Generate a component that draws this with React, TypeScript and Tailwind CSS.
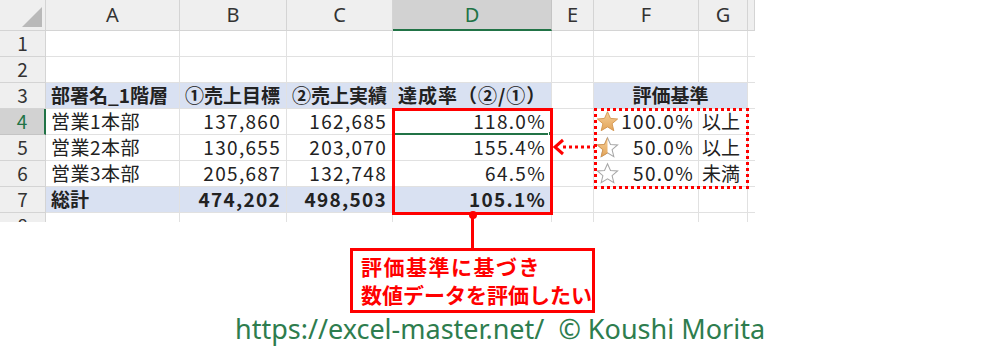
import React from "react";

const jp = { fontFamily: '"Noto Sans CJK JP", "Noto Sans", sans-serif' };

type StarKind = "full" | "half" | "empty";

function Star({ kind }: { kind: StarKind }) {
  const pts = "10,1.5 12.6,7.3 18.8,7.8 14,11.9 15.5,18 10,14.7 4.5,18 6,11.9 1.2,7.8 7.4,7.3";
  return (
    <svg width="23" height="23" viewBox="0 0 20 20" className="shrink-0">
      <defs>
        <linearGradient id="gold" x1="0" y1="0" x2="0" y2="1">
          <stop offset="0" stopColor="#f6cf98" />
          <stop offset="1" stopColor="#e3a55a" />
        </linearGradient>
        <clipPath id="lefthalf">
          <rect x="0" y="0" width="10" height="20" />
        </clipPath>
      </defs>
      {kind === "full" && <polygon points={pts} fill="url(#gold)" stroke="#d39550" strokeWidth="0.8" />}
      {kind !== "full" && <polygon points={pts} fill="#fff" stroke="#a6a6a6" strokeWidth="0.9" />}
      {kind === "half" && (
        <polygon points={pts} fill="url(#gold)" stroke="#d39550" strokeWidth="0.8" clipPath="url(#lefthalf)" />
      )}
    </svg>
  );
}

const cols = ["A", "B", "C", "D", "E", "F", "G", ""];

const data = [
  ["営業1本部", "137,860", "162,685", "118.0%"],
  ["営業2本部", "130,655", "203,070", "155.4%"],
  ["営業3本部", "205,687", "132,748", "64.5%"],
];

const criteria: [StarKind, string, string][] = [
  ["full", "100.0%", "以上"],
  ["half", "50.0%", "以上"],
  ["empty", "50.0%", "未満"],
];

const cell = "border-r border-b border-[#e1e1e1] px-[5px] flex items-center whitespace-nowrap";
const num = "tracking-[1.3px]";
const rowHead = "border-r border-b border-[#d4d4d4] bg-[#efefef] flex items-center justify-center text-[#333]";

export default function App() {
  return (
    <div className="w-[1000px] h-[350px] bg-white relative overflow-hidden text-[19px] text-[#222]" style={jp}>
      {/* sheet */}
      <div className="h-[222px] w-[755px] overflow-hidden">
        <div className="grid grid-cols-[46px_134px_107px_106px_159px_42px_105px_49px_7px] grid-rows-[31px_repeat(8,26px)]">
          {/* column headers */}
          <div className="bg-[#efefef] border-r border-b border-[#d4d4d4] relative">
            <div className="absolute right-[3px] bottom-[3px] w-0 h-0 border-l-[20px] border-l-transparent border-b-[20px] border-b-[#b9b9b9]" />
          </div>
          {cols.map((c, i) =>
            c === "D" ? (
              <div
                key={i}
                className="bg-[#d2d2d2] border-r border-[#c4c4c4] border-b-2 border-b-[#217346] flex items-center justify-center text-[#217346] text-[20px]"
                style={{ fontFamily: '"Noto Sans", sans-serif' }}
              >
                {c}
              </div>
            ) : (
              <div
                key={i}
                className="bg-[#efefef] border-r border-b border-[#d4d4d4] flex items-center justify-center text-[#333] text-[20px]"
                style={{ fontFamily: '"Noto Sans", sans-serif' }}
              >
                {c}
              </div>
            )
          )}

          {/* rows 1 and 2 */}
          {[1, 2].map((r) => (
            <React.Fragment key={r}>
              <div className={rowHead}>{r}</div>
              {cols.map((_, i) => (
                <div key={i} className={cell} />
              ))}
            </React.Fragment>
          ))}

          {/* row 3 */}
          <div className={rowHead}>3</div>
          <div className={`${cell} bg-[#d9e1f2] font-bold`}>部署名_1階層</div>
          <div className={`${cell} bg-[#d9e1f2] font-bold`}>①売上目標</div>
          <div className={`${cell} bg-[#d9e1f2] font-bold`}>②売上実績</div>
          <div className={`${cell} bg-[#d9e1f2] font-bold tracking-[1px]`}>達成率（②/①）</div>
          <div className={cell} />
          <div className={`${cell} col-span-2 bg-[#d9e1f2] font-bold justify-center`}>評価基準</div>
          <div className={cell} />

          {/* rows 4-6 */}
          {data.map((d, i) => (
            <React.Fragment key={i}>
              {i === 0 ? (
                <div className="border-r-2 border-r-[#217346] border-b border-[#c4c4c4] bg-[#d2d2d2] flex items-center justify-center text-[#217346]">
                  4
                </div>
              ) : (
                <div className={rowHead}>{i + 4}</div>
              )}
              <div className={`${cell} tracking-[0.5px]`}>{d[0]}</div>
              <div className={`${cell} ${num} justify-end`}>{d[1]}</div>
              <div className={`${cell} ${num} justify-end`}>{d[2]}</div>
              <div className={`${cell} ${num} justify-end`}>{d[3]}</div>
              <div className={cell} />
              <div className={`${cell} justify-between pl-[2px] pr-[4px]`}>
                <Star kind={criteria[i][0]} />
                <span className={num}>{criteria[i][1]}</span>
              </div>
              <div className={`${cell} pl-[3px]`}>{criteria[i][2]}</div>
              <div className={cell} />
            </React.Fragment>
          ))}

          {/* row 7 */}
          <div className={rowHead}>7</div>
          <div className={`${cell} bg-[#d9e1f2] font-bold`}>総計</div>
          <div className={`${cell} ${num} bg-[#d9e1f2] font-bold justify-end`}>474,202</div>
          <div className={`${cell} ${num} bg-[#d9e1f2] font-bold justify-end`}>498,503</div>
          <div className={`${cell} ${num} bg-[#d9e1f2] font-bold justify-end`}>105.1%</div>
          <div className={cell} />
          <div className={cell} />
          <div className={cell} />
          <div className={cell} />

          {/* row 8 (cut off) */}
          <div className={rowHead}>8</div>
          {cols.map((_, i) => (
            <div key={i} className={cell} />
          ))}
        </div>
      </div>

      {/* callout */}
      <div className="ml-[350px] mt-[26px] w-[245px] h-[65px] border-[3px] border-[#ff0000] bg-white pl-[8px] pt-[1px] text-[#ff0000] font-bold text-[21px] leading-[28px]">
        <div className="tracking-[1.5px]">評価基準に基づき</div>
        <div>数値データを評価したい</div>
      </div>

      {/* footer */}
      <div
        className="text-center text-[27px] leading-[32px] text-[#2e7d4e]"
        style={{ fontFamily: '"Noto Sans", sans-serif' }}
      >
        https://excel-master.net/&nbsp;&nbsp;© Koushi Morita
      </div>

      {/* selected cell border */}
      <div className="absolute left-[393px] top-[133px] w-[157px] h-[2px] bg-[#217346]" />
      <div className="absolute left-[548px] top-[131px] w-[5px] h-[5px] bg-[#217346] border border-white" />

      {/* red range box */}
      <div className="absolute left-[392px] top-[108px] w-[161px] h-[107px] border-[3px] border-[#ff0000]" />
      <div className="absolute left-[469px] top-[211px] w-[8px] h-[8px] rounded-full bg-[#ff0000]" />
      <div className="absolute left-[471px] top-[214px] w-[3px] h-[35px] bg-[#ff0000]" />

      {/* criteria dotted box */}
      <div className="absolute left-[594px] top-[108px] w-[155px] h-[81px] border-[3px] border-dotted border-[#ff0000]" />

      {/* dotted arrow */}
      <svg className="absolute left-[552px] top-[138px]" width="44" height="18" viewBox="0 0 44 18">
        <line x1="11" y1="9" x2="43" y2="9" stroke="#ff0000" strokeWidth="3" strokeDasharray="3 3" />
        <polyline points="11,2 3,9 11,16" fill="none" stroke="#ff0000" strokeWidth="3" />
      </svg>
    </div>
  );
}
